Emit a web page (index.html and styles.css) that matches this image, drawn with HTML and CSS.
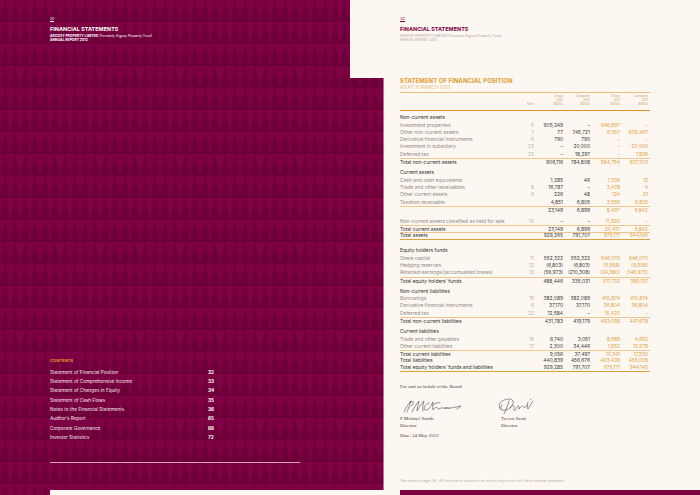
FILE: index.html
```html
<!DOCTYPE html>
<html lang="en">
<head>
<meta charset="utf-8">
<title>Financial Statements</title>
<link rel="stylesheet" href="styles.css">
</head>
<body>
<div class="spread">
  <section class="page left maroon">
    <header class="running">
      <div class="folio">31</div>
      <h2 class="run-title">FINANCIAL STATEMENTS</h2>
      <p class="run-sub"><b>ARGOSY PROPERTY LIMITED</b> (Formerly Argosy Property Trust)</p>
      <p class="run-sub"><b>ANNUAL REPORT 2012</b></p>
    </header>
    <div class="contents">
      <h3 class="contents-title">CONTENTS</h3>
      <ul class="toc">
        <li><span>Statement of Financial Position</span><b>32</b></li>
        <li><span>Statement of Comprehensive Income</span><b>33</b></li>
        <li><span>Statement of Changes in Equity</span><b>34</b></li>
        <li><span>Statement of Cash Flows</span><b>35</b></li>
        <li><span>Notes to the Financial Statements</span><b>36</b></li>
        <li><span>Auditor’s Report</span><b>65</b></li>
        <li><span>Corporate Governance</span><b>66</b></li>
        <li><span>Investor Statistics</span><b>72</b></li>
      </ul>
    </div>
    <div class="rule"></div>
    <div class="foot-cream"></div>
  </section>

  <section class="page right">
    <div class="strip maroon"></div>
    <header class="running">
      <div class="folio">32</div>
      <h2 class="run-title">FINANCIAL STATEMENTS</h2>
      <p class="run-sub">ARGOSY PROPERTY LIMITED (Formerly Argosy Property Trust)</p>
      <p class="run-sub">ANNUAL REPORT 2012</p>
    </header>

    <div class="statement">
      <h1 class="st-title">STATEMENT OF FINANCIAL POSITION</h1>
      <p class="st-sub">AS AT 31 MARCH 2012</p>

      <div class="thead">
        <span></span>
        <span>Note</span>
        <span>Group<br>2012<br>$000s</span>
        <span>Company<br>2012<br>$000s</span>
        <span>Group<br>2011<br>$000s</span>
        <span>Company<br>2011<br>$000s</span>
      </div>

      <div class="row sec first"><span>Non-current assets</span></div>
      <div class="row"><span>Investment properties</span><span>5</span><span>905,249</span><span>–</span><span>946,897</span><span>–</span></div>
      <div class="row"><span>Other non-current assets</span><span>7</span><span>77</span><span>745,721</span><span>6,057</span><span>909,467</span></div>
      <div class="row"><span>Derivative financial instruments</span><span>6</span><span>790</span><span>790</span><span>–</span><span>–</span></div>
      <div class="row"><span>Investment in subsidiary</span><span>23</span><span>–</span><span>20,000</span><span>–</span><span>20,000</span></div>
      <div class="row"><span>Deferred tax</span><span>22</span><span>–</span><span>18,297</span><span>–</span><span>7,836</span></div>
      <div class="row tot"><span>Total non-current assets</span><span></span><span>906,116</span><span>784,808</span><span>954,754</span><span>937,303</span></div>

      <div class="row sec"><span>Current assets</span></div>
      <div class="row"><span>Cash and cash equivalents</span><span></span><span>1,285</span><span>46</span><span>1,339</span><span>12</span></div>
      <div class="row"><span>Trade and other receivables</span><span>8</span><span>16,787</span><span>–</span><span>3,478</span><span>4</span></div>
      <div class="row"><span>Other current assets</span><span>9</span><span>226</span><span>48</span><span>124</span><span>21</span></div>
      <div class="row"><span>Taxation receivable</span><span></span><span>4,851</span><span>6,805</span><span>3,556</span><span>6,805</span></div>
      <div class="row tot"><span></span><span></span><span>23,149</span><span>6,899</span><span>8,497</span><span>6,842</span></div>
      <div class="spacer"></div>
      <div class="row"><span>Non-current assets classified as held for sale</span><span>10</span><span>–</span><span>–</span><span>11,920</span><span>–</span></div>
      <div class="row tot"><span>Total current assets</span><span></span><span>23,149</span><span>6,899</span><span>20,417</span><span>6,842</span></div>
      <div class="row tot grand"><span>Total assets</span><span></span><span>929,265</span><span>791,707</span><span>975,171</span><span>944,145</span></div>

      <div class="row sec wide"><span>Equity holders funds</span></div>
      <div class="row"><span>Share capital</span><span>11</span><span>552,322</span><span>552,322</span><span>546,070</span><span>546,070</span></div>
      <div class="row"><span>Hedging reserves</span><span>12</span><span>(6,803)</span><span>(6,803)</span><span>(9,958)</span><span>(9,958)</span></div>
      <div class="row"><span>Retained earnings/(accumulated losses)</span><span>13</span><span>(56,973)</span><span>(210,308)</span><span>(24,380)</span><span>(146,975)</span></div>
      <div class="row tot"><span>Total equity holders’ funds</span><span></span><span>488,446</span><span>335,031</span><span>511,732</span><span>389,137</span></div>

      <div class="row sec"><span>Non-current liabilities</span></div>
      <div class="row"><span>Borrowings</span><span>15</span><span>382,089</span><span>382,089</span><span>410,874</span><span>410,874</span></div>
      <div class="row"><span>Derivative financial instruments</span><span>6</span><span>37,170</span><span>37,170</span><span>36,804</span><span>36,804</span></div>
      <div class="row"><span>Deferred tax</span><span>22</span><span>12,584</span><span>–</span><span>15,420</span><span>–</span></div>
      <div class="row tot"><span>Total non-current liabilities</span><span></span><span>431,783</span><span>419,179</span><span>463,098</span><span>447,678</span></div>

      <div class="row sec"><span>Current liabilities</span></div>
      <div class="row"><span>Trade and other payables</span><span>16</span><span>6,740</span><span>3,051</span><span>8,689</span><span>4,652</span></div>
      <div class="row"><span>Other current liabilities</span><span>17</span><span>2,300</span><span>34,446</span><span>1,652</span><span>12,678</span></div>
      <div class="row tot"><span>Total current liabilities</span><span></span><span>9,056</span><span>37,497</span><span>10,341</span><span>17,330</span></div>
      <div class="row strong"><span>Total liabilities</span><span></span><span>440,839</span><span>456,676</span><span>463,439</span><span>455,008</span></div>
      <div class="row strong last"><span>Total equity holders’ funds and liabilities</span><span></span><span>929,285</span><span>791,707</span><span>975,171</span><span>944,145</span></div>
    </div>

    <div class="board">
      <p class="board-line">For and on behalf of the Board</p>
      <svg class="sigs" width="150" height="26" viewBox="0 0 150 26" aria-hidden="true">
        <g fill="none" stroke="#3a3a3a" stroke-width="0.55" stroke-linecap="round" stroke-linejoin="round">
          <path d="M4,22 C6,17 9,13 11,11 C10,15 8,19 7,22"/>
          <path d="M10,12 C14,10 15,14 11,16"/>
          <path d="M12,22 C14,18 17,13 19,11 C18,15 17,19 17,21 C19,17 22,13 24,11 C23,15 22,19 23,21"/>
          <path d="M29,13 C24,14 22,21 27,20 C30,19 31,15 33,12 C33,16 32,19 33,20 C35,17 37,16 38,19 C39,20 41,17 43,18 C45,19 47,17 49,18"/>
          <path d="M33,15 C36,13 38,12 40,13"/>
          <path d="M45,18 C50,19 55,17 61,16 L57,19"/>
          <path d="M101,20 C96,14 102,9 110,9 C116,10 113,18 106,20 C102,21 99,19 102,15"/>
          <path d="M109,11 C108,15 106,20 104,24"/>
          <path d="M110,18 C112,14 115,15 114,19 C113,22 116,20 117,17 C118,15 120,16 119,19 C121,17 122,15 124,17 C125,19 126,16 127,15"/>
          <path d="M128,12 C127,15 127,18 128,19 C129,17 131,14 133,11"/>
          <path d="M130,10 L131,9"/>
        </g>
      </svg>
      <div class="signers">
        <p class="signer">P Michael Smith<br>Director</p>
        <p class="signer">Trevor Scott<br>Director</p>
      </div>
      <p class="board-date">Date: 24 May 2012</p>
    </div>

    <p class="footnote">The notes on pages 36 - 64 form part of and are to be read in conjunction with these financial statements.</p>
    <div class="foot-maroon"></div>
  </section>
</div>
</body>
</html>
```

FILE: styles.css
```css
* { box-sizing: border-box; }
html, body { margin: 0; padding: 0; }
body {
  width: 700px;
  height: 495px;
  overflow: hidden;
  background: #fcf8f1;
  font-family: Inter, "Liberation Sans", sans-serif;
  font-size: 5px;
  line-height: 6px;
}
p, h1, h2, h3, ul { margin: 0; padding: 0; }
ul { list-style: none; }

.spread {
  display: flex;
  width: 700px;
  height: 495px;
}

.maroon {
  background-color: #7f0044;
  background-image: conic-gradient(from 167.2deg at 50% 0, #6c0039 0deg 25.6deg, transparent 25.6deg);
  background-size: 10px 22px;
  background-attachment: fixed;
}

.page {
  position: relative;
  width: 350px;
  height: 495px;
  display: flex;
  flex-direction: column;
  padding-left: 50px;
}

/* running header */
.running { padding-top: 15.5px; }
.folio {
  display: block;
  width: max-content;
  font-size: 4px;
  line-height: 5px;
  padding-bottom: 0.5px;
  border-bottom: 0.6px solid currentColor;
}
.run-title {
  margin-top: 3.5px;
  font-size: 5.4px;
  line-height: 6px;
  font-weight: 700;
  letter-spacing: 0.05px;
}
.run-sub {
  font-size: 3.4px;
  line-height: 4px;
}
.run-title + .run-sub { margin-top: 2px; }

.left { color: #fff; }
.left .run-sub b { font-weight: 700; }

/* contents */
.contents { margin-top: 316.5px; }
.contents-title {
  font-size: 4px;
  line-height: 5px;
  font-weight: 700;
  color: #e39a2e;
  letter-spacing: 0.1px;
}
.toc { margin-top: 4.9px; width: 166px; }
.toc li {
  display: flex;
  justify-content: space-between;
  font-size: 4.7px;
  line-height: 9.3px;
  font-weight: 400;
  color: #f6e8ee;
}
.toc li b { font-weight: 700; width: 8px; color: #fff; }

.rule {
  margin-top: 19.5px;
  width: 250px;
  height: 0.8px;
  background: #d8a3bb;
}
.foot-cream {
  margin-top: auto;
  height: 5px;
  background: #fcf8f1;
}

/* right page */
.right { color: #3b3835; background: #fcf8f1; }
.right .folio, .right .run-title { color: #7b0042; }
.right .run-sub { color: #a9a39c; }

.strip {
  position: absolute;
  left: 0;
  top: 78px;
  width: 33.5px;
  height: 412px;
  border-right: 1px solid #b86f92;
}

.statement { width: 250px; margin-top: 35.5px; }
.st-title {
  font-size: 6px;
  line-height: 7px;
  font-weight: 700;
  color: #e19c33;
  letter-spacing: 0.05px;
}
.st-sub {
  margin-top: 0.8px;
  font-size: 4.7px;
  line-height: 5.5px;
  color: #ebbb74;
  padding-bottom: 2px;
  border-bottom: 1px solid #ebbd78;
}

.thead, .row {
  display: grid;
  grid-template-columns: 124px 10px 29px 27px 30px 28px;
  padding-right: 2px;
}
.thead {
  padding-top: 2px;
  padding-bottom: 3px;
  border-bottom: 1.5px solid #dc8f22;
  font-size: 3.1px;
  line-height: 3.8px;
  color: #c9a06a;
  align-items: end;
}
.thead span { text-align: right; }

.row {
  height: 7.3px;
  font-size: 4.9px;
  line-height: 7.3px;
  color: #3b3835;
  white-space: nowrap;
}
.row span { text-align: right; }
.row span:first-child { text-align: left; color: #8f8a85; }
.row span:nth-child(2) { color: #b9b3ad; }
.row span:nth-child(5), .row span:nth-child(6) { color: #e3a23f; }

.row.sec { margin-top: 4px; }
.row.sec.first { margin-top: 3.6px; }
.row.sec.wide { margin-top: 7.6px; }
.row.sec span:first-child,
.row.tot span:first-child,
.row.strong span:first-child { color: #2f2c2a; }

.row.tot { border-top: 1px solid #efc68f; line-height: 6.3px; }
.row.grand { border-bottom: 1.5px solid #e0a040; line-height: 4.8px; }
.row.last { border-bottom: 1.5px solid #e0a040; height: 7.3px; line-height: 5.8px; }
.spacer { height: 4.7px; }

/* board */
.board {
  margin-top: 11.8px;
  font-family: "Liberation Serif", serif;
  font-size: 5px;
  color: #3f3c3a;
}
.board-line { line-height: 6px; }
.sigs { display: block; }
.signers { display: flex; }
.signer { width: 101px; line-height: 6.7px; }
.board-date { margin-top: 4px; line-height: 6.7px; }

.footnote {
  margin-top: auto;
  margin-bottom: 7px;
  font-size: 3.3px;
  line-height: 4px;
  color: #b3ada6;
}
.foot-maroon {
  height: 5px;
  background: #7b0042;
}
```
